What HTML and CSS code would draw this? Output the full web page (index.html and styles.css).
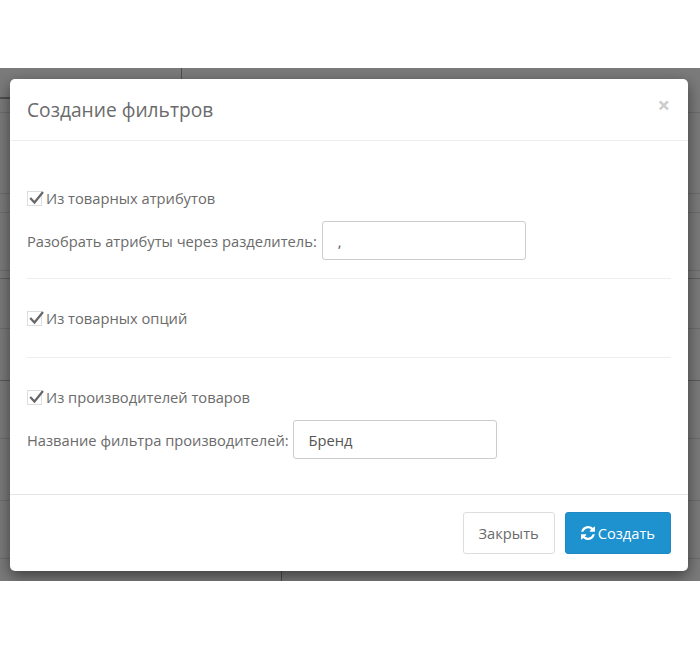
FILE: index.html
```html
<!DOCTYPE html>
<html lang="ru">
<head>
  <meta charset="UTF-8">
  <title>Создание фильтров</title>
  <link rel="stylesheet" href="styles.css">
</head>
<body>
  <div class="backdrop">
    <div class="modal">
      <div class="modal-header">
        <h4>Создание фильтров</h4>
        <span class="close">&times;</span>
      </div>
      <div class="modal-body">
        <div class="group">
          <label class="check">
            <svg width="18" height="16" viewBox="0 0 18 16"><rect x="0.5" y="1.5" width="14" height="14" fill="#fff" stroke="#ddd"/><path d="M3.200 8 L7.500 12.500 L16 2" fill="none" stroke="#666" stroke-width="2.200"/></svg>
            Из товарных атрибутов
          </label>
          <div class="field">
            <label>Разобрать атрибуты через разделитель:</label>
            <input type="text" value=",">
          </div>
        </div>
        <div class="group group-single">
          <label class="check">
            <svg width="18" height="16" viewBox="0 0 18 16"><rect x="0.5" y="1.5" width="14" height="14" fill="#fff" stroke="#ddd"/><path d="M3.200 8 L7.500 12.500 L16 2" fill="none" stroke="#666" stroke-width="2.200"/></svg>
            Из товарных опций
          </label>
        </div>
        <div class="group">
          <label class="check">
            <svg width="18" height="16" viewBox="0 0 18 16"><rect x="0.5" y="1.5" width="14" height="14" fill="#fff" stroke="#ddd"/><path d="M3.200 8 L7.500 12.500 L16 2" fill="none" stroke="#666" stroke-width="2.200"/></svg>
            Из производителей товаров
          </label>
          <div class="field field-brand">
            <label>Название фильтра производителей:</label>
            <input type="text" value="Бренд">
          </div>
        </div>
      </div>
      <div class="modal-footer">
        <button class="btn btn-close">Закрыть</button>
        <button class="btn btn-primary">
          <svg width="14" height="14" viewBox="0 0 1536 1536"><path fill="#fff" d="M1511 928q0 5-1 7-64 268-268 434.500T764 1536q-146 0-282.500-55T238 1324l-129 129q-19 19-45 19t-45-19-19-45V960q0-26 19-45t45-19h448q26 0 45 19t19 45-19 45L420 1142q71 66 161 102t187 36q134 0 250-65t186-179q11-17 53-117 8-23 30-23h192q13 0 22.500 9.500t9.500 22.500zm25-800v448q0 26-19 45t-45 19h-448q-26 0-45-19t-19-45 19-45l138-138q-148-137-349-137-134 0-250 65T332 500q-11 17-53 117-8 23-30 23H50q-13 0-22.500-9.500T18 608v-7q65-268 270-434.500T768 0q146 0 284 55.500T1297 212l130-129q19-19 45-19t45 19 19 45z"/></svg>
          Создать
        </button>
      </div>
    </div>
  </div>
</body>
</html>
```

FILE: styles.css
```css
body {
  margin: 0;
  background-color: #fff;
  font-family: "Open Sans", sans-serif;
  font-size: 14.7px;
  color: #6b6b6b;
}

/* the dimmed table behind the dialog */
.backdrop {
  margin-top: 68px;
  height: 513px;
  padding: 11px 12px 10px 10px;
  box-sizing: border-box;
  overflow: hidden;
  background-color: #7b7b7b;
  background-image:
    linear-gradient(#4f4f4f, #4f4f4f),
    linear-gradient(#6c6c6c, #6c6c6c),
    linear-gradient(#6c6c6c, #6c6c6c),
    linear-gradient(#6c6c6c, #6c6c6c),
    linear-gradient(#6c6c6c, #6c6c6c),
    linear-gradient(#606060, #606060),
    linear-gradient(#6c6c6c, #6c6c6c),
    linear-gradient(#5a5a5a, #5a5a5a),
    linear-gradient(#6c6c6c, #6c6c6c),
    linear-gradient(#6c6c6c, #6c6c6c),
    linear-gradient(#6c6c6c, #6c6c6c),
    linear-gradient(#4f4f4f, #4f4f4f),
    linear-gradient(#4f4f4f, #4f4f4f);
  background-repeat: no-repeat;
  background-size:
    10px 2px,
    100% 1px,
    100% 1px,
    100% 1px,
    100% 1px,
    100% 1px,
    100% 1px,
    100% 1px,
    100% 1px,
    100% 1px,
    100% 1px,
    1px 11px,
    1px 10px;
  background-position:
    0 29px,
    0 44px,
    0 125px,
    0 144px,
    0 202px,
    0 210px,
    0 260px,
    0 312px,
    0 370px,
    0 432px,
    0 490px,
    181px 0,
    281px 503px;
}

.modal {
  height: 492px;
  display: flex;
  flex-direction: column;
  background: #fff;
  border-radius: 5px;
  box-shadow: 0 5px 15px rgba(0, 0, 0, 0.5);
}

.modal-header {
  height: 61px;
  flex-shrink: 0;
  padding: 0 18px 0 17px;
  display: flex;
  justify-content: space-between;
  border-bottom: 1px solid #eee;
}

.modal-header h4 {
  margin: 19px 0 0;
  font-size: 19.2px;
  line-height: 24px;
  font-weight: 400;
  color: #6b6b6b;
}

.close {
  margin-top: 11px;
  font-size: 22px;
  line-height: 28px;
  font-weight: 700;
  color: #ccc;
}

.modal-body {
  flex: 1;
  padding: 47px 17px 0;
}

.group {
  border-bottom: 1px solid #eee;
  padding-bottom: 18px;
  margin-bottom: 29px;
}

.group-single {
  padding-bottom: 29px;
}

.group:last-child {
  border-bottom: none;
  margin-bottom: 0;
}

.check {
  display: flex;
  align-items: center;
  gap: 1px;
  height: 20px;
  line-height: 20px;
}

.field {
  display: flex;
  align-items: center;
  gap: 5px;
  margin-top: 13px;
}

.field-brand {
  gap: 4px;
}

.field input {
  width: 204px;
  height: 39px;
  box-sizing: border-box;
  padding: 0 15px;
  border: 1px solid #ccc;
  border-radius: 3px;
  font: inherit;
  color: #555;
}

.modal-footer {
  height: 77px;
  flex-shrink: 0;
  padding: 17px 17px 0;
  box-sizing: border-box;
  display: flex;
  justify-content: flex-end;
  align-items: flex-start;
  gap: 10px;
  border-top: 1px solid #e5e5e5;
}

.btn {
  height: 42px;
  padding: 0 15px;
  font: inherit;
  color: #6b6b6b;
  background: #fff;
  border: 1px solid #ddd;
  border-radius: 3px;
}

.btn-close {
  width: 92px;
  padding: 0;
}

.btn-primary {
  display: flex;
  align-items: center;
  gap: 3px;
  color: #fff;
  background: #1e91cf;
  border-color: #1e8ac4;
}
```
